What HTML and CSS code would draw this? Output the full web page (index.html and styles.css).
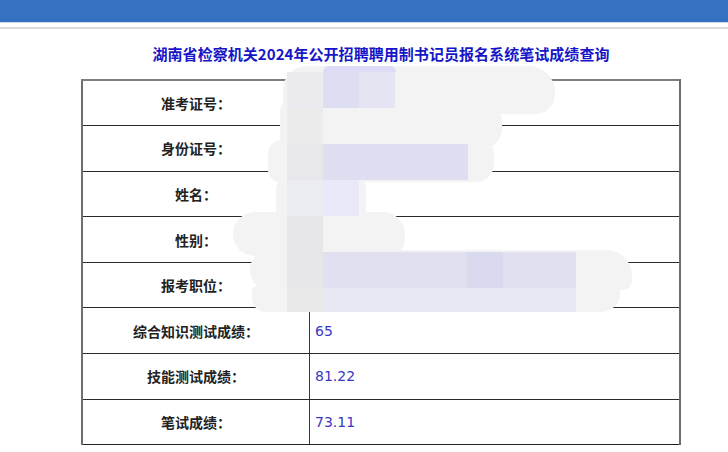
FILE: index.html
```html
<!DOCTYPE html>
<html lang="zh-CN">
<head>
<meta charset="utf-8">
<title>成绩查询</title>
<link rel="stylesheet" href="styles.css">
</head>
<body>
<header class="topbar"></header>
<div class="rule"></div>
<main class="wrap">
  <h1 class="title">湖南省检察机关2024年公开招聘聘用制书记员报名系统笔试成绩查询</h1>
  <table class="sheet">
    <tr><th>准考证号：</th><td></td></tr>
    <tr><th>身份证号：</th><td></td></tr>
    <tr><th>姓名：</th><td></td></tr>
    <tr><th>性别：</th><td></td></tr>
    <tr><th>报考职位：</th><td></td></tr>
    <tr><th>综合知识测试成绩：</th><td>65</td></tr>
    <tr><th>技能测试成绩：</th><td>81.22</td></tr>
    <tr><th>笔试成绩：</th><td>73.11</td></tr>
  </table>
</main>
<div class="redact">
  <div class="g g1"></div>
  <div class="g g2"></div>
  <div class="g g3"></div>
  <div class="g g4"></div>
  <div class="g g5"></div>
  <div class="g g6"></div>
  <div class="g g7"></div>
  <div class="c c-top"></div>
  <div class="c r1a"></div>
  <div class="c r1b"></div>
  <div class="c r1c"></div>
  <div class="c r2a"></div>
  <div class="c r3a"></div>
  <div class="c r3b"></div>
  <div class="c r4a"></div>
  <div class="c r4b"></div>
  <div class="c r5a"></div>
  <div class="c r6a"></div>
  <div class="c r6b"></div>
  <div class="c r6c"></div>
  <div class="c r7a"></div>
  <div class="c r7b"></div>
</div>
</body>
</html>
```
FILE: styles.css
```css
html, body {
  margin: 0;
  padding: 0;
  background: #ffffff;
}
body {
  font-family: "Noto Sans CJK SC", "Noto Sans", sans-serif;
  position: relative;
  width: 728px;
  height: 452px;
  overflow: hidden;
}
.topbar {
  height: 22px;
  background: #3670c0;
  border-bottom: 1px solid #c8dbe4;
}
.rule {
  margin-top: 4px;
  height: 2px;
  background: #dadada;
}
.wrap {
  width: 600px;
  margin-left: 81px;
}
.title {
  margin: 13px 0 0 0;
  height: 24px;
  line-height: 24px;
  font-size: 15px;
  font-weight: 700;
  color: #1616c8;
  text-align: center;
  letter-spacing: 0.05px;
  white-space: nowrap;
}
.sheet {
  margin-top: 13px;
  width: 600px;
  border-collapse: collapse;
  border-top: 2px solid #7e7e7e;
  border-left: 2px solid #6e6e6e;
  border-right: 2px solid #6e6e6e;
  table-layout: fixed;
}
.sheet tr {
  height: 45.6px;
}
.sheet th {
  width: 226px;
  border-bottom: 1px solid #2a2a2a;
  border-right: 1px solid #3a3a3a;
  font-size: 14px;
  font-weight: 700;
  color: #222222;
  text-align: center;
  padding: 0;
}
.sheet td {
  border-bottom: 1px solid #2a2a2a;
  padding: 0 0 0 5px;
  font-family: "DejaVu Sans", sans-serif;
  font-size: 14px;
  color: #3838c4;
  text-align: left;
}
.sheet tr:last-child th,
.sheet tr:last-child td {
  border-bottom: 1.5px solid #222;
}

/* privacy redaction overlay */
.redact {
  position: absolute;
  left: 0;
  top: 0;
  width: 728px;
  height: 452px;
  pointer-events: none;
}
.redact div {
  position: absolute;
}
.g { background: #f3f3f3; }
.g1 { left: 283px; top: 66px; width: 272px; height: 48px; border-radius: 24px 26px 20px 14px; }
.g2 { left: 280px; top: 100px; width: 222px; height: 50px; border-radius: 10px 22px 22px 10px; }
.g3 { left: 268px; top: 140px; width: 226px; height: 42px; border-radius: 14px 14px 18px 12px; }
.g4 { left: 276px; top: 176px; width: 90px; height: 44px; border-radius: 14px 12px 10px 12px; }
.g5 { left: 233px; top: 212px; width: 172px; height: 44px; border-radius: 22px 22px 18px 22px; }
.g6 { left: 250px; top: 250px; width: 382px; height: 40px; border-radius: 22px 28px 10px 22px; }
.g7 { left: 252px; top: 286px; width: 368px; height: 26px; border-radius: 6px 10px 24px 18px; }

.c-top { left: 323px; top: 66px; width: 73px; height: 6px; background: #dcdcf6; border-radius: 6px 6px 0 0; }
.r1a { left: 287px; top: 72px; width: 36px; height: 36px; background: #ebebf0; }
.r1b { left: 323px; top: 72px; width: 36px; height: 36px; background: #dedef2; }
.r1c { left: 359px; top: 72px; width: 36px; height: 36px; background: #e4e4f3; }
.r2a { left: 287px; top: 108px; width: 36px; height: 36px; background: #ececec; }
.r3a { left: 287px; top: 144px; width: 36px; height: 36px; background: #e8e8ec; }
.r3b { left: 323px; top: 144px; width: 145px; height: 36px; background: #dfdff1; }
.r4a { left: 287px; top: 180px; width: 36px; height: 36px; background: #ececf3; }
.r4b { left: 323px; top: 180px; width: 36px; height: 36px; background: #e9e9fa; }
.r5a { left: 287px; top: 216px; width: 36px; height: 36px; background: #e7e7ea; }
.r6a { left: 287px; top: 252px; width: 36px; height: 36px; background: #e7e7ea; }
.r6b { left: 323px; top: 252px; width: 253px; height: 36px; background: #e0e0f1; }
.r6c { left: 467px; top: 252px; width: 36px; height: 36px; background: #d9d9ef; }
.r7a { left: 287px; top: 288px; width: 36px; height: 24px; background: #e9e9e9; }
.r7b { left: 323px; top: 288px; width: 253px; height: 24px; background: #e8e8f5; }
```
